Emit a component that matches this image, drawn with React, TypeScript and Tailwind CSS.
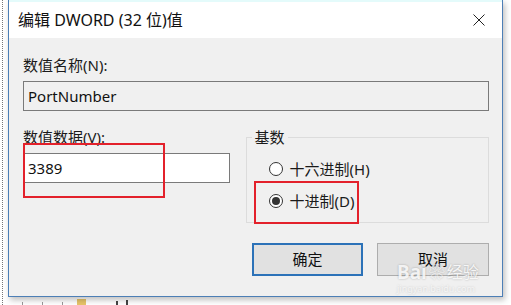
import { useState } from 'react'

const font = { fontFamily: '"Noto Sans", "Noto Sans CJK SC", sans-serif' }

function Radio({ checked, label, onClick }: { checked: boolean; label: string; onClick: () => void }) {
  return (
    <div className="flex h-[32px] cursor-default items-center gap-[7px]" onClick={onClick}>
      <span className="flex h-[14px] w-[14px] items-center justify-center rounded-full border border-[#333] bg-white">
        {checked && <span className="h-[8px] w-[8px] rounded-full bg-[#333]" />}
      </span>
      <span className="text-[15px] leading-[20px] text-[#1a1a1a]">{label}</span>
    </div>
  )
}

export default function App() {
  const [base, setBase] = useState<'hex' | 'dec'>('dec')
  const [value, setValue] = useState('3389')

  return (
    <div className="relative h-[305px] w-[511px] overflow-hidden bg-white" style={font}>
      {/* explorer behind */}
      <div className="absolute left-[2px] top-0 h-[305px] border-l border-dotted border-[#777]" />
      <div className="absolute bottom-0 left-[22px] flex h-[8px] items-end gap-[19px]">
        <span className="h-[3px] w-px bg-[#999]" />
        <span className="h-[3px] w-px bg-[#999]" />
        <span className="h-[3px] w-px bg-[#999]" />
      </div>
      <div className="absolute bottom-0 left-[77px] h-[6px] w-[9px] bg-[#e8c56a]" />
      <div className="absolute bottom-0 left-[116px] h-[4px] w-[2px] bg-[#444]" />
      <div className="absolute bottom-0 left-[126px] h-[5px] w-[2px] bg-[#444]" />

      {/* dialog */}
      <div className="relative ml-[8px] w-[495px] border-x border-b border-[#4d7fb6] shadow-[2px_3px_6px_rgba(0,0,0,0.25)]">
        <div className="flex h-[38px] items-center justify-between border-t-2 border-[#e4fbfb] bg-white pl-[9px] pr-[17px]">
          <span className="text-[16px] leading-[20px] text-[#111]">编辑 DWORD (32 位)值</span>
          <svg width="12" height="12" viewBox="0 0 12 12">
            <path d="M0.5 0.5 L11.5 11.5 M11.5 0.5 L0.5 11.5" stroke="#222" strokeWidth="1" />
          </svg>
        </div>

        <div className="h-[258px] bg-[#f0f0f0] pl-[14px] pr-[13px] pt-[17px]">
          <div className="text-[15px] leading-[20px] text-[#1a1a1a]">数值名称(N):</div>
          <div className="mt-[6px] flex h-[30px] items-center border border-[#7a7a7a] bg-[#f0f0f0] px-[4px] text-[15px] text-[#111]">
            PortNumber
          </div>

          <div className="mt-[16px] flex gap-[16px]">
            <div className="w-[207px]">
              <div className="text-[15px] leading-[20px] text-[#1a1a1a]">数值数据(V):</div>
              <input
                value={value}
                onChange={e => setValue(e.target.value)}
                className="mt-[6px] h-[30px] w-full border border-[#7a7a7a] bg-white px-[4px] text-[15px] text-[#111] outline-none"
              />
            </div>
            <fieldset className="h-[96px] w-[244px] border border-[#dcdcdc]">
              <legend className="ml-[5px] px-[3px] text-[15px] leading-[20px] text-[#1a1a1a]">基数</legend>
              <div className="pl-[22px] pt-[6px]">
                <Radio checked={base === 'hex'} label="十六进制(H)" onClick={() => setBase('hex')} />
                <Radio checked={base === 'dec'} label="十进制(D)" onClick={() => setBase('dec')} />
              </div>
            </fieldset>
          </div>

          <div className="mt-[20px] flex justify-end gap-[14px]">
            <button className="h-[33px] w-[111px] border-2 border-[#2c72b8] bg-[#e1e1e1] text-[15px] text-[#111]">确定</button>
            <button className="h-[33px] w-[112px] border border-[#adadad] bg-[#e1e1e1] text-[15px] text-[#111]">取消</button>
          </div>
        </div>

        {/* red annotation boxes */}
        <div className="absolute left-[14px] top-[143px] h-[55px] w-[142px] border-2 border-[#e3212b]" />
        <div className="absolute left-[245px] top-[181px] h-[43px] w-[105px] border-2 border-[#e3212b]" />

        {/* watermark */}
        <div className="absolute left-[388px] top-[262px] flex flex-col items-start text-white/85 [text-shadow:0_0_2px_rgba(0,0,0,0.3)]">
          <div className="flex h-[20px] items-center gap-[2px] text-[19px] font-bold leading-[20px]">
            <span>Bai</span>
            <span className="text-[16px]">❀</span>
            <span className="text-[16px] font-normal">经验</span>
          </div>
          <span className="mt-[2px] text-[9px] leading-[10px] opacity-60">jingyan.baidu.com</span>
        </div>
      </div>
    </div>
  )
}
